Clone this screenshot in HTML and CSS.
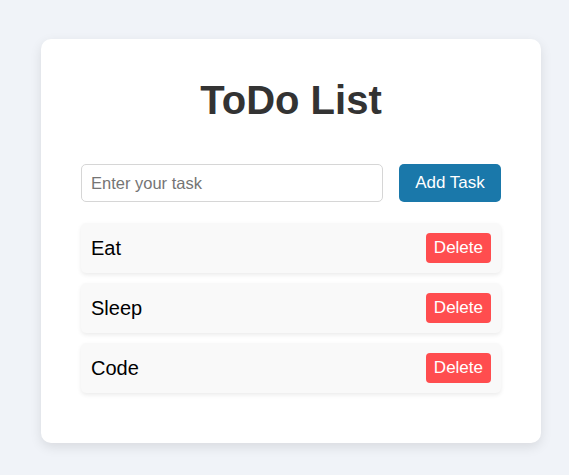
FILE: index.html
```html
<!DOCTYPE html>
<html>
<head>
<meta charset="utf-8">
<link rel="stylesheet" href="styles.css">
</head>
<body>
<div class="card">
  <h1 class="title">ToDo List</h1>
  <div class="form">
    <input class="task-input" type="text" placeholder="Enter your task">
    <button class="add-btn">Add Task</button>
  </div>
  <ul class="list">
    <li class="item"><span class="item-text">Eat</span><button class="del-btn">Delete</button></li>
    <li class="item"><span class="item-text">Sleep</span><button class="del-btn">Delete</button></li>
    <li class="item"><span class="item-text">Code</span><button class="del-btn">Delete</button></li>
  </ul>
</div>
</body>
</html>
```
FILE: styles.css
```css
html, body {
  margin: 0;
  padding: 0;
}
body {
  background: #f0f3f8;
  font-family: "Liberation Sans", Arial, sans-serif;
  padding: 39px 0 0 41px;
  height: 475px;
  box-sizing: border-box;
}
.card {
  width: 500px;
  box-sizing: border-box;
  background: #fff;
  border-radius: 10px;
  box-shadow: 0 4px 12px rgba(0, 0, 0, 0.1);
  padding: 38px 40px 40px;
}
.title {
  margin: 0 0 41px;
  font-size: 40px;
  font-weight: bold;
  color: #333;
  text-align: center;
  line-height: 46px;
}
.form {
  display: flex;
  gap: 16px;
  margin-bottom: 21px;
}
.task-input {
  flex: 1;
  height: 38px;
  box-sizing: border-box;
  border: 1px solid #d6d6d6;
  border-radius: 5px;
  padding: 0 9px;
  font-family: "Liberation Sans", Arial, sans-serif;
  font-size: 16.5px;
  color: #333;
  outline: none;
}
.task-input::placeholder {
  color: #757575;
}
.add-btn {
  width: 102px;
  height: 38px;
  border: none;
  border-radius: 5px;
  background: #1a78aa;
  color: #fff;
  font-family: "Liberation Sans", Arial, sans-serif;
  font-size: 17px;
  padding: 0;
}
.list {
  list-style: none;
  margin: 0;
  padding: 0;
}
.item {
  display: flex;
  align-items: center;
  justify-content: space-between;
  background: #f9f9f9;
  border-radius: 5px;
  box-shadow: 0 2px 4px rgba(0, 0, 0, 0.08);
  padding: 10px;
  margin-bottom: 10px;
}
.item-text {
  font-size: 20px;
  color: #000;
}
.del-btn {
  height: 30px;
  border: none;
  border-radius: 4px;
  background: #ff4d4f;
  color: #fff;
  font-family: "Liberation Sans", Arial, sans-serif;
  font-size: 17px;
  padding: 0 8px;
}
```
